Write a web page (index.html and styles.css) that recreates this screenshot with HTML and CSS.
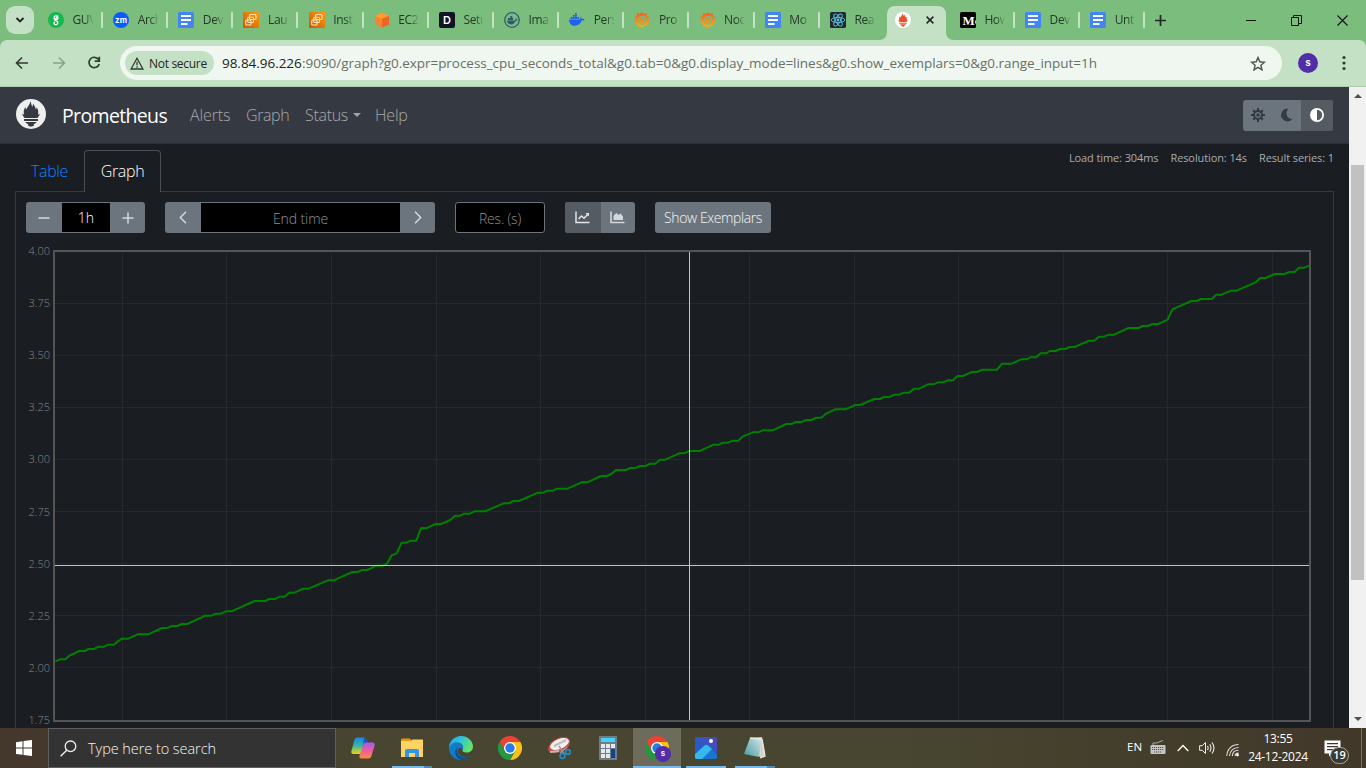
FILE: index.html
```html
<!DOCTYPE html>
<html lang="en">
<head>
<meta charset="utf-8">
<title>Prometheus Time Series Collection and Processing Server</title>
<link rel="stylesheet" href="styles.css">
</head>
<body>
<svg class="defs" width="0" height="0">
  <defs>
    <linearGradient id="orange" x1="0" y1="1" x2="1" y2="0"><stop offset="0" stop-color="#c95a08"/><stop offset="1" stop-color="#ff9a0c"/></linearGradient>
    <linearGradient id="flame" x1="0" y1="0" x2="0" y2="1"><stop offset="0" stop-color="#f05a28"/><stop offset="1" stop-color="#fbb414"/></linearGradient>
    <linearGradient id="edge" x1="0" y1="1" x2="1" y2="0"><stop offset="0" stop-color="#0c59a4"/><stop offset=".5" stop-color="#1b9de2"/><stop offset="1" stop-color="#5be07a"/></linearGradient>
    <linearGradient id="edgetop" x1="0" y1="0" x2="1" y2=".4"><stop offset="0" stop-color="#2aa5e6"/><stop offset=".5" stop-color="#2fc3dc"/><stop offset="1" stop-color="#62e46a"/></linearGradient>
    <linearGradient id="photo" x1="0" y1="1" x2="1" y2="0"><stop offset="0" stop-color="#1267cf"/><stop offset="1" stop-color="#5146b8"/></linearGradient>
    <linearGradient id="cop1" x1="0" y1="0" x2="0" y2="1"><stop offset="0" stop-color="#1689e8"/><stop offset=".5" stop-color="#38b6a0"/><stop offset="1" stop-color="#f5d20a"/></linearGradient>
    <linearGradient id="cop2" x1="0" y1="0" x2="0" y2="1"><stop offset="0" stop-color="#a45be8"/><stop offset=".5" stop-color="#ee5aa0"/><stop offset="1" stop-color="#ff8a3c"/></linearGradient>
    <linearGradient id="note" x1="0" y1="1" x2="1" y2="0"><stop offset="0" stop-color="#4c98a4"/><stop offset="1" stop-color="#c8e8e8"/></linearGradient>
  </defs>
  <symbol id="docs" viewBox="0 0 16 16"><rect width="16" height="16" rx="1.500" fill="#4285f4"/><path d="M3 4h10M3 8h10M3 12h6.500" stroke="#fff" stroke-width="1.800"/></symbol>
  <symbol id="aws" viewBox="0 0 16 16"><rect width="16" height="16" fill="url(#orange)"/><g fill="none" stroke="#ffe2bd" stroke-width="1.100"><rect x="6.500" y="2.500" width="6.500" height="5" rx="1"/><rect x="4.700" y="5.200" width="5.800" height="5.300" rx="1"/><rect x="2.700" y="8" width="5.300" height="5" rx="1"/></g></symbol>
  <symbol id="grafana" viewBox="0 0 16 16"><path d="m8 0 1.700 2 2.800-.9.600 2.900 2.200 1.200-1 2.400 1.200 2.200-2 1.600-.3 2.500-2.600-.1L8.400 16l-2.200-1.600-2.900.3-.6-2.700L.4 10.300l1-2.500L.3 5.300l2.300-1.500.5-2.600 2.800.5Z" fill="url(#flame)"/><path d="M12.500 7.500C12 5 9.500 3.800 7.200 4.800 4.300 6 4 9.800 6.300 11.500c2 1.500 4.700.3 4.800-2 .1-2-2.200-3.100-3.300-1.800" fill="none" stroke="#7bbd7d" stroke-width="1.500"/></symbol>
  <symbol id="torch" viewBox="0 0 16 16"><path d="M7.700 1.300c.6 1 .3 2 1.200 2.800.2-.6 0-1 .2-1.600 1 1 1 2 1.600 3.100.2-.4.400-.8.300-1.300.9 1.400 1.100 2.600.7 4.100.5-.2.700-.4 1-.7-.2 1.100-.7 1.700-1.300 2.400H4.600C4 9.500 3.500 8.800 3.300 7.700c.3.300.6.500 1 .6-.4-1.600-.1-2.800.7-4 0 .5.100.9.400 1.300C6 4.300 7.400 3 7.700 1.300ZM4.300 10.700h7.400v1H4.300ZM5 12.300h6c-.4.500-.8.900-1.500 1.100v.7c-.5.700-2.500.7-3 0v-.7C5.800 13.200 5.400 12.900 5 12.300Z"/></symbol>
  <symbol id="chrome" viewBox="0 0 24 24"><path d="M1.600 6A12 12 0 0 1 22.400 6H12l-5.200 9Z" fill="#ea4335"/><path d="M22.400 6A12 12 0 0 1 12 24l5.200-9L12 6Z" fill="#fbc116"/><path d="M12 24A12 12 0 0 1 1.600 6l5.200 9c2 3 6 4 10.400 0Z" fill="#23983f"/><circle cx="12" cy="12" r="6" fill="#fff"/><circle cx="12" cy="12" r="4.700" fill="#297be6"/></symbol>
</svg>

<header class="tabstrip">
  <div class="tab-search"><svg width="10" height="8" viewBox="0 0 10 8"><path d="m1.500 2 3.500 3.500L8.500 2" fill="none" stroke="#202522" stroke-width="1.900"/></svg></div>
  <div class="tab"><svg class="fav" viewBox="0 0 16 16"><circle cx="8" cy="8" r="8" fill="#16b851"/><circle cx="8" cy="5.700" r="1.900" fill="none" stroke="#fff" stroke-width="1.300"/><path d="M9.800 3.500 7 8.200l2.300 1.300c1.200 1.200.2 3.300-1.400 3.200-2 0-2.500-2-1-2.800" fill="none" stroke="#fff" stroke-width="1.300"/></svg><span>GUV</span></div>
  <div class="tab"><svg class="fav" viewBox="0 0 16 16"><circle cx="8" cy="8" r="8" fill="#0b5cff"/><text x="8" y="10.800" text-anchor="middle" class="zm">zm</text></svg><span>Arch</span></div>
  <div class="tab"><svg class="fav"><use href="#docs"/></svg><span>Dev</span></div>
  <div class="tab"><svg class="fav"><use href="#aws"/></svg><span>Lau</span></div>
  <div class="tab"><svg class="fav"><use href="#aws"/></svg><span>Inst</span></div>
  <div class="tab"><svg class="fav" viewBox="0 0 16 16"><path d="m8 .5 7 3.500v8.500L8 15.500 1 12.500V4Z" fill="#f58536"/><path d="m8 .5 7 3.500-7 3-7-3Z" fill="#ff9d28"/><path d="m8 7 7-3v8.500l-7 3Z" fill="#ed6523"/></svg><span>EC2</span></div>
  <div class="tab"><svg class="fav" viewBox="0 0 16 16"><rect width="16" height="16" rx="2" fill="#101426"/><text x="8" y="12" text-anchor="middle" class="dmark">D</text></svg><span>Setu</span></div>
  <div class="tab"><svg class="fav" viewBox="0 0 16 16"><circle cx="8" cy="8" r="7.300" fill="#7bb98a" stroke="#2d5c68" stroke-width="1.200"/><path d="M3 8.500h7.500c1 0 1.500-1.200 1-2.500 1 .4 1.300 1 1.300 1.500l1.200.3c-.6 1-1.300 1-2.200 1-1 2.500-2.500 3.600-4.800 3.600C5 12.400 3.300 11 3 8.500ZM4 6h5v2H4ZM6.300 4h2v2h-2Z" fill="#2d5c68"/></svg><span>Ima</span></div>
  <div class="tab"><svg class="fav" viewBox="0 0 16 16"><path d="M0 7.500h11c.7-.8.600-2 .1-2.900 1.100.6 1.500 1.300 1.600 2.200 1.100-.3 2-.1 3 .4-.7 1.300-1.700 1.500-3 1.400-1.200 3.300-3.500 5.200-7 5.200C2.200 13.800.3 11.500 0 7.500ZM1.600 5h1.900v1.900H1.600Zm2.200 0h1.900v1.900H3.800ZM6 5h1.900v1.900H6Zm2.200 0h1.900v1.900H8.200ZM3.800 2.900h1.900v1.800H3.800Zm2.200 0h1.900v1.800H6ZM6 1h1.900v1.600H6Z" fill="#1d63ed"/></svg><span>Pers</span></div>
  <div class="tab"><svg class="fav"><use href="#grafana"/></svg><span>Pro</span></div>
  <div class="tab"><svg class="fav"><use href="#grafana"/></svg><span>Noc</span></div>
  <div class="tab"><svg class="fav"><use href="#docs"/></svg><span>Mo</span></div>
  <div class="tab last"><svg class="fav" viewBox="0 0 16 16"><rect width="16" height="16" rx="1.500" fill="#23272f"/><g fill="none" stroke="#58c4dc" stroke-width=".9"><ellipse cx="8" cy="8" rx="6.800" ry="2.600"/><ellipse cx="8" cy="8" rx="6.800" ry="2.600" transform="rotate(60 8 8)"/><ellipse cx="8" cy="8" rx="6.800" ry="2.600" transform="rotate(120 8 8)"/></g><circle cx="8" cy="8" r="1.400" fill="#58c4dc"/></svg><span>Rea</span></div>
  <div class="tab-active">
    <svg width="75" height="34" viewBox="0 0 75 34" class="tab-shape"><path d="M0 34c5 0 8-3 8-8V9c0-6 3-9 9-9h41c6 0 9 3 9 9v17c0 5 3 8 8 8Z" fill="#c5e1c5"/></svg>
    <svg class="fav" viewBox="0 0 16 16"><circle cx="8" cy="8" r="8" fill="#fff"/><use href="#torch" fill="#e6522c" width="16" height="16"/></svg>
    <svg class="close" width="8" height="8" viewBox="0 0 8 8"><path d="m.6.600 6.800 6.800m0-6.800L.6 7.400" stroke="#222822" stroke-width="1.500"/></svg>
  </div>
  <div class="tab"><svg class="fav" viewBox="0 0 16 16"><rect width="16" height="16" rx="1.500"/><text x="2.500" y="12.500" class="medium">Mc</text></svg><span>How</span></div>
  <div class="tab"><svg class="fav"><use href="#docs"/></svg><span>Dev</span></div>
  <div class="tab"><svg class="fav"><use href="#docs"/></svg><span>Unt</span></div>
  <svg class="newtab" width="11" height="11" viewBox="0 0 11 11"><path d="M5.500 0v11M0 5.500h11" stroke="#202820" stroke-width="1.700"/></svg>
  <div class="winctl">
    <svg width="10" height="11" viewBox="0 0 10 11"><path d="M0 5.500h10" stroke="#111"/></svg>
    <svg width="11" height="11" viewBox="0 0 11 11"><path d="M.5 2.500h7v8h-7ZM2.500 2.500v-2h8v8h-3" fill="none" stroke="#111"/></svg>
    <svg width="11" height="11" viewBox="0 0 11 11"><path d="m.5.500 10 10m0-10-10 10" stroke="#111" stroke-width="1.100"/></svg>
  </div>
</header>

<div class="toolbar-wrap"><div class="toolbar">
  <svg class="back" width="14" height="14" viewBox="0 0 14 14"><path d="M13 7H1.500M7 1.500 1.500 7 7 12.500" fill="none" stroke="#303a32" stroke-width="1.600"/></svg>
  <svg class="forward" width="14" height="14" viewBox="0 0 14 14"><path d="M1 7h11.500M7 1.500 12.500 7 7 12.500" fill="none" stroke="#8aa18c" stroke-width="1.600"/></svg>
  <svg class="reload" width="14" height="14" viewBox="0 0 14 14"><path d="M11.500 3.500A5.200 5.200 0 1 0 12.200 8M12.300.8v4.400H7.800" fill="none" stroke="#303a32" stroke-width="1.700"/></svg>
  <div class="omnibox">
    <div class="chip"><svg width="14" height="13" viewBox="0 0 14 13"><path d="M7 1.300 12.900 12H1.100ZM7 4.800v3.500M7 9.300v1.500" fill="none" stroke="#303a32" stroke-width="1.300"/></svg><span>Not secure</span></div>
    <div class="url"><span class="host">98.84.96.226</span><span class="path">:9090/graph?g0.expr=process_cpu_seconds_total&amp;g0.tab=0&amp;g0.display_mode=lines&amp;g0.show_exemplars=0&amp;g0.range_input=1h</span></div>
    <svg class="star" width="16" height="15" viewBox="0 0 16 15"><path d="m8 1.500 1.800 4.300 4.700.4-3.600 3.100 1.100 4.600L8 11.400l-4 2.500 1.100-4.600-3.600-3.100 4.700-.4Z" fill="none" stroke="#4c554d" stroke-width="1.400"/></svg>
  </div>
  <div class="avatar">s</div>
  <svg class="kebab" width="4" height="16" viewBox="0 0 4 16"><circle cx="2" cy="2.500" r="1.600"/><circle cx="2" cy="8" r="1.600"/><circle cx="2" cy="13.500" r="1.600"/></svg>
</div></div>

<div class="viewport">
  <div class="page">
    <nav class="navbar">
      <svg class="logo" viewBox="0 0 16 16"><circle cx="8" cy="8" r="8" fill="#eee"/><use href="#torch" fill="#353941" width="16" height="16"/></svg>
      <span class="brand">Prometheus</span>
      <a class="n-alerts">Alerts</a><a class="n-graph">Graph</a><a class="n-status">Status<i class="caret"></i></a><a class="n-help">Help</a>
      <div class="themes">
        <span><svg width="14" height="14" viewBox="0 0 14 14"><circle cx="7" cy="7" r="4" fill="none" stroke="#343a40" stroke-width="2"/><circle cx="7" cy="7" r="1.800" fill="#343a40"/><path d="M7 0v3M7 11v3M0 7h3M11 7h3M2.200 2.200l2 2M9.800 9.800l2 2M2.200 11.800l2-2M9.800 4.200l2-2" stroke="#343a40" stroke-width="2"/></svg></span>
        <span><svg width="12" height="14" viewBox="0 0 12 14"><path d="M7.500.8A6.300 6.300 0 1 0 11.300 11 5.800 5.800 0 0 1 7.500.8Z" fill="#343a40"/></svg></span>
        <span class="on"><svg width="14" height="14" viewBox="0 0 14 14"><circle cx="7" cy="7" r="6.100" fill="none" stroke="#fff" stroke-width="1.800"/><path d="M7 1a6 6 0 0 0 0 12Z" fill="#fff"/></svg></span>
      </div>
    </nav>
    <div class="tabsrow">
      <div class="t-table">Table</div><div class="t-graph">Graph</div>
      <div class="stats"><span>Load time: 304ms</span><span>Resolution: 14s</span><span>Result series: 1</span></div>
    </div>
    <section class="panel">
      <div class="controls">
        <div class="group range"><b><svg width="12" height="12" viewBox="0 0 12 12"><path d="M.5 6h11" stroke="#d5d8db" stroke-width="1.600"/></svg></b><span>1h</span><b><svg width="12" height="12" viewBox="0 0 12 12"><path d="M.5 6h11M6 .5v11" stroke="#d5d8db" stroke-width="1.500"/></svg></b></div>
        <div class="group end"><b><svg width="8" height="13" viewBox="0 0 8 13"><path d="M7 .8 1.300 6.500 7 12.200" fill="none" stroke="#d5d8db" stroke-width="1.500"/></svg></b><span>End time</span><b><svg width="8" height="13" viewBox="0 0 8 13"><path d="m1 .8 5.700 5.700L1 12.200" fill="none" stroke="#d5d8db" stroke-width="1.500"/></svg></b></div>
        <div class="res">Res. (s)</div>
        <div class="group kinds"><b class="on"><svg width="15" height="13" viewBox="0 0 15 13"><path d="M1 .5v11h13.500" fill="none" stroke="#e3e5e7" stroke-width="1.500"/><path d="m3.500 8 3-3 2.500 2.200 4.300-4.400" fill="none" stroke="#e3e5e7" stroke-width="1.500"/><path d="M10.500 2H14v3.500Z" fill="#e3e5e7"/></svg></b><b><svg width="15" height="13" viewBox="0 0 15 13"><path d="M1 .5v11h13.500" fill="none" stroke="#d5d8db" stroke-width="1.600"/><path d="M3.500 9V5l2.700-3 2.300 2 2-1.500L13 5.500V9Z" fill="#d5d8db"/></svg></b></div>
        <div class="exemplars">Show Exemplars</div>
      </div>
      <svg class="chart" width="1300" height="487" viewBox="16 241 1300 487">
        <path d="M122.500 251v469M226.500 251v469M331.500 251v469M436.500 251v469M540.500 251v469M645.500 251v469M749.500 251v469M854.500 251v469M958.500 251v469M1063.500 251v469M1167.500 251v469M1272.500 251v469M55 303.500h1254M55 355.500h1254M55 407.500h1254M55 459.500h1254M55 511.500h1254M55 563.500h1254M55 615.500h1254M55 667.500h1254" stroke="#26292c"/>
        <g class="series">
          <polyline transform="translate(20 500) scale(.33333)" points="106,484 120,478 136,478 150,466 178,453 194,453 206,447 222,447 236,440 253,440 265,434 282,434 294,424 306,416 325,416 353,403 385,403 426,384 442,384 456,378 471,378 486,372 502,372 556,347 574,347 587,341 603,341 618,334 635,334 704,303 736,303 748,297 765,297 779,290 794,290 808,278 824,278 850,266 866,266 924,241 941,241 997,216 1013,216 1026,210 1042,210 1069,197 1088,197 1101,191 1115,166 1130,160 1145,128 1160,128 1173,122 1189,122 1203,85 1219,85"/>
          <polyline transform="translate(400 400) scale(.33333)" points="63,385 79,385 106,372 123,372 151,360 165,347 181,347 193,341 209,341 224,334 255,334 311,310 327,310 340,303 357,303 414,278 430,278 442,272 459,272 471,266 502,266 545,247 562,247 603,228 620,228 634,222 648,210 678,210 691,204 706,204 720,198 737,198 751,191 766,191 780,179 796,179 838,160 853,160 868,153 899,153 941,134 957,134 969,128 985,128 998,122 1015,122 1029,109 1059,97 1075,97 1088,91 1118,91 1159,72 1175,72 1188,66 1204,66 1219,60 1235,60 1248,53 1264,53 1278,41 1306,28 1336,28 1366,15 1380,15"/>
          <polyline transform="translate(860 250) scale(.33333)" points="-14,465 0,465 43,447 60,447 72,441 88,441 103,434 118,434 131,428 148,428 161,416 178,416 204,403 220,403 234,397 250,397 263,391 279,391 293,378 309,378 335,366 351,366 367,359 411,359 426,341 456,341 483,328 499,328 512,322 528,322 542,310 558,310 570,303 587,303 600,297 616,297 628,291 644,291 687,272 703,272 717,260 733,260 746,254 763,254 805,234 836,234 848,228 864,228 877,222 895,222 923,209 937,178 994,153 1010,153 1023,147 1055,147 1069,134 1085,134 1113,122 1130,122 1187,97 1201,84 1217,84 1244,72 1274,72 1288,66 1304,66 1317,53 1333,53 1348,47"/>
        </g>
        <path d="M55 565.500h1254M689.500 251v469" stroke="#c3c6c9"/>
        <rect x="54" y="251" width="1256" height="470" fill="none" stroke="#545454" stroke-width="2"/>
        <g class="ticks"><text x="50" y="255">4.00</text><text x="50" y="307">3.75</text><text x="50" y="359">3.50</text><text x="50" y="411">3.25</text><text x="50" y="463">3.00</text><text x="50" y="516">2.75</text><text x="50" y="568">2.50</text><text x="50" y="620">2.25</text><text x="50" y="672">2.00</text><text x="50" y="724">1.75</text></g>
      </svg>
    </section>
  </div>
  <div class="scrollbar"><i class="up"></i><div class="thumb"></div><i class="down"></i></div>
</div>

<footer class="taskbar">
  <div class="start"><svg width="16" height="16" viewBox="0 0 16 16"><path d="m0 2.200 6.500-.9v6.300H0ZM7.500 1.100 16 0v7.600H7.500ZM0 8.500h6.500v6.300L0 13.900ZM7.500 8.500H16V16l-8.500-1.100Z" fill="#fff"/></svg></div>
  <div class="search"><svg width="17" height="17" viewBox="0 0 17 17"><circle cx="10.500" cy="6.300" r="5.300" fill="none" stroke="#eee" stroke-width="1.300"/><path d="M6.700 10.200.6 16.200" stroke="#eee" stroke-width="1.400"/></svg><span>Type here to search</span></div>
  <div class="apps">
    <div class="app"><svg viewBox="0 0 24 24"><path d="M6 1.500h7c2 0 2 1.500 1.500 3L11 16c-.5 1.500-1.500 2-3 2H3c-3 0-3-2-2.300-4L3.500 4C4 2.500 4.500 1.500 6 1.500Z" fill="url(#cop1)"/><path d="M13 1.500c3 0 3 5 5 5h-5l-1.500 5Z" fill="#1d55c9"/><path d="M16 6.500h5c3 0 3 2 2.300 4L20.500 20c-.5 1.500-1.500 2.500-3 2.500H10c-1.500 0-2-1.500-1.500-3L12.500 9c.5-1.500 1.500-2.500 3.500-2.500Z" fill="url(#cop2)"/></svg></div>
    <div class="app"><svg viewBox="0 0 24 24"><path d="M1 4c0-1 .5-1.500 1.500-1.500H10L12 5H1Z" fill="#e39b12"/><path d="M1 5h9.500l2-1.500H23V21H1Z" fill="#fdd461"/><path d="M5 21v-6c0-1 .6-2 2-2h10c1.400 0 2 1 2 2v6h-4v-4H9v4Z" fill="#3594e4"/></svg><i class="bar"></i><i class="more"></i></div>
    <div class="app"><svg viewBox="0 0 24 24"><path d="M0 12C0 5 5.500 0 12 0s12 5 12 10.500c0 4-3 6-6.500 6-3 0-4.500-1.200-4-2.500 1.500-2 .5-5.500-3-6C6 7.500 2 8.500 0 12Z" fill="url(#edgetop)"/><path d="M0 12c1-4 5.500-6.500 10-5.500 4 .8 5 5 3.500 7.500-1-2.500-3-3-4-1.500-2 3 .5 8 6 8.500 2.500.2 5-.6 6.500-1.500C20 22.500 16.500 24 12 24 5 24 0 18.500 0 12Z" fill="#147bc6"/><path d="M8.500 11c-2 5 1 10.500 7 10.500 2.500 0 5-.8 6.500-2C20 22.500 16.500 24 12.500 24 6 23 4.500 15 8.500 11Z" fill="#0b4f94"/></svg></div>
    <div class="app"><svg><use href="#chrome"/></svg></div>
    <div class="app"><svg viewBox="0 0 24 24"><ellipse cx="12" cy="10" rx="11.500" ry="6" transform="rotate(-22 12 10)" fill="#c85050"/><ellipse cx="12.500" cy="8" rx="10.500" ry="5.500" transform="rotate(-22 12.500 8)" fill="#f3eeee" stroke="#d23b3b"/><path d="m7 10 12-6M3 16l9-1" stroke="#bbb" stroke-width="2"/><path d="m12 10 6 9m2-8-7 6" stroke="#999" stroke-width="1.400"/><circle cx="15.500" cy="20" r="2.400" fill="none" stroke="#278bc5" stroke-width="1.700"/><circle cx="21" cy="16" r="2.300" fill="none" stroke="#278bc5" stroke-width="1.700"/></svg></div>
    <div class="app"><svg viewBox="0 0 24 24"><rect x="3" y="0" width="18" height="24" rx="1" fill="#6f7c8a"/><rect x="5" y="2" width="14" height="4" fill="#45d3f5"/><path d="M5 8h4v4H5Zm5 0h4v4h-4Zm5 0h4v4h-4ZM5 13h4v4H5Zm5 0h4v4h-4ZM5 18h4v4H5Zm5 0h4v4h-4Z" fill="#e7e8ea"/><path d="M15 13h4v9h-4Z" fill="#0f458e"/></svg></div>
    <div class="app active"><svg><use href="#chrome"/></svg><i class="badge">s</i><i class="bar"></i></div>
    <div class="app"><svg viewBox="0 0 24 24"><rect x="1" y="1" width="22" height="22" rx="2" fill="url(#photo)"/><path d="M1 20 11 10c1.200-1.200 2.500-1 3.500 0L23 18.500V21c0 1.300-.8 2-2 2H1Z" fill="#1976d0"/><path d="M1 18 10.500 9.500c1-1 2.600-1 3.600.1L18 13 8 23H3c-1.200 0-2-.8-2-2Z" fill="#32b9ed"/><circle cx="17" cy="5" r="2" fill="#fff"/></svg><i class="bar"></i></div>
    <div class="app"><svg viewBox="0 0 24 24"><path d="m7 2 12-1 3 18-4 3-3-3Z" fill="#d7d4c5"/><path d="m7 2 11 1-2 18L1 18Z" fill="url(#note)"/><path d="m7 2 11 1M19 3l3 17-5 2" fill="none" stroke="#ececec" stroke-width="1.300"/></svg><i class="bar"></i><i class="more"></i></div>
  </div>
  <div class="tray">
    <span class="lang">EN</span>
    <svg class="kbd" width="16" height="15" viewBox="0 0 16 15"><path d="M3 5V3h4l2-1 4-1.500" fill="none" stroke="#aaa"/><rect x=".5" y="5" width="15" height="9" rx="1" fill="#c5c5c5"/><path d="M2 7.500h12M2 9.500h12M4 12h8" stroke="#555" stroke-dasharray="1.200 .8"/></svg>
    <svg class="chev" width="12" height="8" viewBox="0 0 12 8"><path d="m.7 7 5.300-5.500L11.300 7" fill="none" stroke="#fff" stroke-width="1.300"/></svg>
    <svg class="vol" width="17" height="14" viewBox="0 0 17 14"><path d="M.6 4.700h2.600L6.500 1.500v11L3.200 9.300H.6Z" fill="none" stroke="#eee"/><path d="M8.500 5q1.300 2 0 4M10.700 3.300q2.600 3.700 0 7.400M13 1.500q4 5.500 0 11" fill="none" stroke="#eee" stroke-width="1.100"/></svg>
    <svg class="wifi" width="14" height="14" viewBox="0 0 14 14"><g fill="none" stroke="#ddd" stroke-width="1.100"><path d="M.8 13C1 6 6 1.500 12.500 1.500M3.500 13c.2-5 4-8.500 9-8.500M6.300 13c.2-3.500 2.700-5.700 6.200-5.700M9 13c.2-1.700 1.500-2.900 3.500-2.900"/></g><circle cx="11.500" cy="12" r="1.400" fill="#fff"/></svg>
    <div class="clock"><span>13:55</span><span>24-12-2024</span></div>
    <div class="action"><svg width="17" height="17" viewBox="0 0 17 17"><path d="M.5.500h16v13H8l-3 3v-3H.500Z" fill="#fff"/><path d="M3 3.700h11M3 6.700h11M3 9.700h7" stroke="#40382a" stroke-width="1.200"/></svg><i>19</i></div>
    <div class="desk"></div>
  </div>
</footer>
</body>
</html>
```

FILE: styles.css
```css
* { box-sizing: border-box; }
html, body { margin: 0; width: 1366px; height: 768px; overflow: hidden; }
body { display: flex; flex-direction: column; font-family: "Open Sans", "Noto Sans", sans-serif; background: #1a1d21; white-space: nowrap; }
svg { display: block; flex: none; }
.defs { position: absolute; }
i { font-style: normal; }
b { font-weight: 400; }

.tabstrip { flex: none; height: 40px; background: #7bbd7d; display: flex; align-items: center; padding-left: 6px; }
.tab-search { width: 28px; height: 28px; border-radius: 9px; background: #c5e1c5; display: flex; align-items: center; justify-content: center; margin-right: 14px; flex: none; }
.tab { flex: none; width: 55px; height: 16px; display: flex; align-items: center; border-right: 2px solid #c5e1c5; margin-right: 10.170px; }
.tab.last { border-right-color: transparent; margin-right: 2px; }
.fav { width: 16px; height: 16px; }
.tab span { font-size: 12px; line-height: 16px; margin-left: 8.500px; width: 20px; overflow: hidden; color: #26382a; letter-spacing: -.35px; -webkit-mask-image: linear-gradient(90deg, #000 60%, rgba(0, 0, 0, .15)); mask-image: linear-gradient(90deg, #000 60%, rgba(0, 0, 0, .15)); }
.tab-active { width: 73px; height: 34px; align-self: flex-end; display: flex; align-items: center; flex: none; padding: 0 0 6px 8px; position: relative; }
.tab-active .fav { position: relative; }
.tab-active .close { position: relative; margin-left: 15px; }
.tab-shape { position: absolute; left: -8px; top: 0; }
.zm { font: 700 8px Inter, sans-serif; fill: #fff; }
.dmark { font: 600 11px Inter, sans-serif; fill: #fff; }
.medium { font: 700 13px "Liberation Serif", serif; fill: #fff; }
.winctl { margin-left: auto; display: flex; gap: 35px; padding-right: 18px; }

.toolbar-wrap { flex: none; height: 47px; background: #7bbd7d; }
.toolbar { height: 47px; background: #c5e1c5; border-bottom: 1px solid #adc9ae; border-radius: 7px 7px 0 0; display: flex; align-items: center; padding-left: 15px; }
.forward { margin-left: 23px; }
.reload { margin-left: 21px; }
.omnibox { margin-left: 19px; width: 1162px; height: 34px; background: #f0f7f0; border-radius: 17px; display: flex; align-items: center; padding-left: 5px; flex: none; }
.chip { width: 89px; height: 24px; border-radius: 12px; background: #c5e1c5; display: flex; align-items: center; padding-left: 5px; gap: 5px; font-size: 12px; letter-spacing: -.3px; color: #1f261f; }
.url { margin-left: 8px; width: 1028px; font-size: 13.500px; letter-spacing: -.035px; display: flex; }
.host { color: #1c221d; width: 80px; }
.path { color: #667067; }
.avatar { margin-left: 16px; width: 20px; height: 20px; border-radius: 50%; background: #512da8; color: #fff; font: 600 10px/19px Inter, sans-serif; text-align: center; }
.kebab { margin-left: 24px; fill: #303a32; }

.viewport { flex: none; height: 641px; display: flex; }
.page { width: 1349px; height: 641px; overflow: hidden; }
.navbar { height: 57px; background: #353941; border-bottom: 1px solid #2b2f35; display: flex; align-items: center; padding: 0 16px 0 16px; font-weight: 300; color: #a6a8ab; font-size: 16px; }
.logo { width: 30px; height: 30px; margin-top: -2px; }
.brand { color: #fff; font-size: 19.500px; font-weight: 400; letter-spacing: -.65px; width: 128px; margin-left: 16px; }
.n-alerts { width: 56px; letter-spacing: -.1px; } .n-graph { width: 59px; letter-spacing: -.4px; } .n-status { width: 70px; display: flex; align-items: center; gap: 5px; letter-spacing: -.3px; } .n-help { letter-spacing: -.2px; }
.caret { border: 4.500px solid transparent; border-top-color: #a2a4a6; border-bottom: 0; }
.themes { margin-left: auto; width: 90px; height: 31px; border-radius: 3px; background: #6c757d; display: flex; overflow: hidden; }
.themes span { width: 29px; display: flex; align-items: center; justify-content: center; }
.themes span:first-child { width: 31px; }
.themes span.on { width: 32px; background: #545b62; flex: none; }
.tabsrow { height: 47px; display: flex; padding: 6px 15px 0; font-size: 16px; font-weight: 300; }
.t-table { width: 69px; text-align: center; line-height: 43px; color: #0a84ff; letter-spacing: -.4px; }
.t-graph { width: 77px; height: 42px; position: relative; line-height: 41px; text-align: center; color: #fff; letter-spacing: -.35px; border: 1px solid #495057; border-bottom: 0; border-radius: 4px 4px 0 0; background: #1a1d21; }
.stats { margin-left: auto; display: flex; gap: 12px; font-size: 11px; line-height: 16px; font-weight: 400; letter-spacing: -.1px; color: #a9adb1; }
.panel { margin: 0 15px; width: 1319px; height: 537px; border: 1px solid #343a40; border-bottom: 0; }
.controls { height: 49px; padding: 10px 10px 0; display: flex; gap: 20px; font-size: 14px; font-weight: 300; }
.group { display: flex; height: 31px; border-radius: 3px; overflow: hidden; background: #6c757d; }
.group b, .group span { display: flex; align-items: center; justify-content: center; }
.group span { background: #000; margin: 1px 0; }
.group b { width: 35px; }
.range { width: 119px; } .range b:first-child { width: 36px; } .range span { width: 48px; color: #fff; }
.end { width: 270px; } .end b:first-child { width: 36px; } .end span { width: 199px; color: #8a939b; letter-spacing: -.1px; padding-top: 1px; }
.res { width: 90px; height: 31px; border: 1px solid #6c757d; border-radius: 3px; background: #000; color: #8a939b; letter-spacing: -.2px; text-align: center; line-height: 31px; }
.kinds { width: 70px; } .kinds .on { background: #545b62; width: 36px; }
.exemplars { width: 116px; height: 31px; border-radius: 3px; background: #6c757d; color: #f4f5f6; text-align: center; line-height: 32px; letter-spacing: -.4px; }
.series polyline { fill: none; stroke: #008000; stroke-width: 6; stroke-linejoin: round; }
.ticks { font: 300 11px "Open Sans", sans-serif; fill: #85878a; text-anchor: end; }
.scrollbar { width: 17px; background: #f1f1f1; display: flex; flex-direction: column; align-items: center; padding: 7px 0; }
.up { border: 4px solid transparent; border-bottom-color: #505050; border-top: 0; }
.down { border: 4px solid transparent; border-top-color: #505050; border-bottom: 0; margin-top: auto; }
.thumb { width: 13px; height: 415px; margin-top: 67px; background: #c1c1c1; }

.taskbar { flex: none; height: 40px; display: flex; background: linear-gradient(90deg, #44372c 0, #484530 27%, #484630 65%, #433d2b 85%, #42382a 100%); color: #fff; }
.start { width: 48px; display: flex; align-items: center; justify-content: center; }
.search { width: 288px; height: 40px; background: #333; border: 1px solid #5f5f5f; display: flex; align-items: center; padding-left: 11px; gap: 11px; font-size: 14.500px; font-weight: 300; letter-spacing: -.06px; color: #f4f4f4; }
.apps { display: flex; margin-left: 3px; gap: 1px; }
.app { width: 48px; height: 40px; display: flex; align-items: center; justify-content: center; position: relative; }
.app svg { width: 24px; height: 24px; }
.app.active { background: #6d6b5a; }
.bar { position: absolute; left: 4px; right: 4px; bottom: 0; height: 2px; background: #76b9ed; }
.active .bar { left: 0; right: 0; }
.more { position: absolute; right: 4px; bottom: 0; width: 8px; height: 2px; background: #5488b0; }
.badge { position: absolute; left: 22px; top: 18px; width: 16px; height: 16px; border-radius: 50%; background: #512da8; font: 600 8px/15px Inter, sans-serif; text-align: center; }
.tray { margin-left: auto; display: flex; align-items: center; width: 239px; font-size: 12px; }
.lang { width: 23px; font-size: 11.500px; margin-top: -4px; }
.kbd { margin-top: -2px; }
.chev { margin-left: 11px; } .vol { margin-left: 10px; } .wifi { margin-left: 10px; margin-top: 3px; }
.clock { width: 62px; margin-left: 7px; display: flex; flex-direction: column; text-align: center; line-height: 18px; letter-spacing: -.3px; }
.action { position: relative; margin-left: 15px; }
.action i { position: absolute; left: 6px; top: 7px; width: 19px; height: 17px; border-radius: 9px; background: #3b3930; border: 1px solid #aaa; font-size: 11px; font-weight: 600; line-height: 14px; text-align: center; }
.desk { width: 1px; height: 40px; background: #777165; margin-left: auto; margin-right: 4px; }
```
